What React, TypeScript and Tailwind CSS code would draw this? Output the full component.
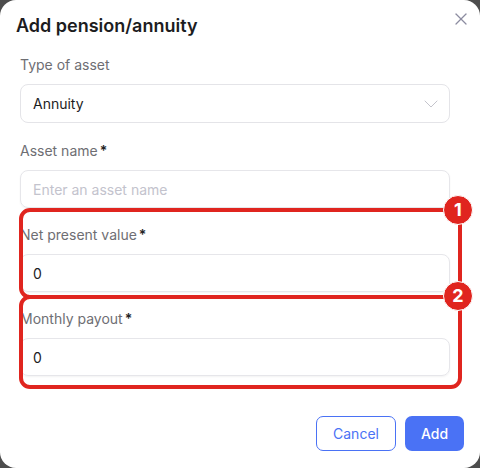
import { X, ChevronDown } from 'lucide-react';

const fields = [
  { label: 'Asset name', required: true, placeholder: 'Enter an asset name', value: '' },
  { label: 'Net present value', required: true, placeholder: '', value: '0' },
  { label: 'Monthly payout', required: true, placeholder: '', value: '0' },
];

function Label({ text, required }: { text: string; required?: boolean }) {
  return (
    <div className="h-5 text-[14px] leading-5 text-[#6e6e73]">
      {text}
      {required && <span className="ml-[2px] font-semibold text-[#222]">*</span>}
    </div>
  );
}

function Marker({ n, top }: { n: number; top: number }) {
  return (
    <div
      className="absolute left-[443px] flex h-[30px] w-[30px] items-center justify-center rounded-full border border-white bg-[#e0251f] text-[18px] font-bold leading-none text-white"
      style={{ top }}
    >
      {n}
    </div>
  );
}

export default function App() {
  return (
    <div className="h-[468px] w-[480px] bg-[#4d4d4d]" style={{ fontFamily: 'Inter, "Noto Sans", sans-serif' }}>
      <div className="relative flex h-full flex-col rounded-[16px] bg-white">
        <div className="flex items-start justify-between pl-4 pr-[9px] pt-[12px]">
          <h2 className="text-[18px] font-semibold leading-7 text-[#1c1c1e]">Add pension/annuity</h2>
          <X className="mt-[-3px] h-5 w-5 text-[#8c8ca0]" strokeWidth={1.5} />
        </div>

        <div className="mt-[15px] flex flex-col gap-[17px] pl-5 pr-[30px]">
          <div className="mb-[1px] flex flex-col gap-[9px]">
            <Label text="Type of asset" />
            <div className="flex h-[39px] items-center justify-between rounded-[8px] border border-[#e4e4e8] px-3">
              <span className="text-[14px] text-[#1c1c1e]">Annuity</span>
              <ChevronDown className="mr-[-6px] h-6 w-6 text-[#c4c4cc]" strokeWidth={1} />
            </div>
          </div>

          {fields.map((f) => (
            <div key={f.label} className="flex flex-col gap-[9px]">
              <Label text={f.label} required={f.required} />
              <div className="flex h-[38px] items-center rounded-[8px] border border-[#e6e6ea] px-3 shadow-[0_1px_2px_rgba(0,0,0,0.05)]">
                {f.value ? (
                  <span className="text-[14px] text-[#1c1c1e]">{f.value}</span>
                ) : (
                  <span className="text-[14px] text-[#c3c3cd]">{f.placeholder}</span>
                )}
              </div>
            </div>
          ))}
        </div>

        <div className="mt-auto flex justify-end gap-[9px] pb-[17px] pr-4">
          <button className="h-[35px] w-[80px] rounded-[7px] border border-[#4a72f5] bg-white text-[14px] text-[#4a72f5]">
            Cancel
          </button>
          <button className="h-[35px] w-[59px] rounded-[7px] bg-[#4a72f5] text-[14px] font-medium text-white">
            Add
          </button>
        </div>

        {/* highlight frames */}
        <div className="absolute left-[19px] top-[208px] h-[91px] w-[443px] rounded-[11px] border-4 border-[#e0251f]" />
        <div className="absolute left-[19px] top-[295px] h-[94px] w-[443px] rounded-[11px] border-4 border-[#e0251f]" />
        <Marker n={1} top={195} />
        <Marker n={2} top={281} />
      </div>
    </div>
  );
}
